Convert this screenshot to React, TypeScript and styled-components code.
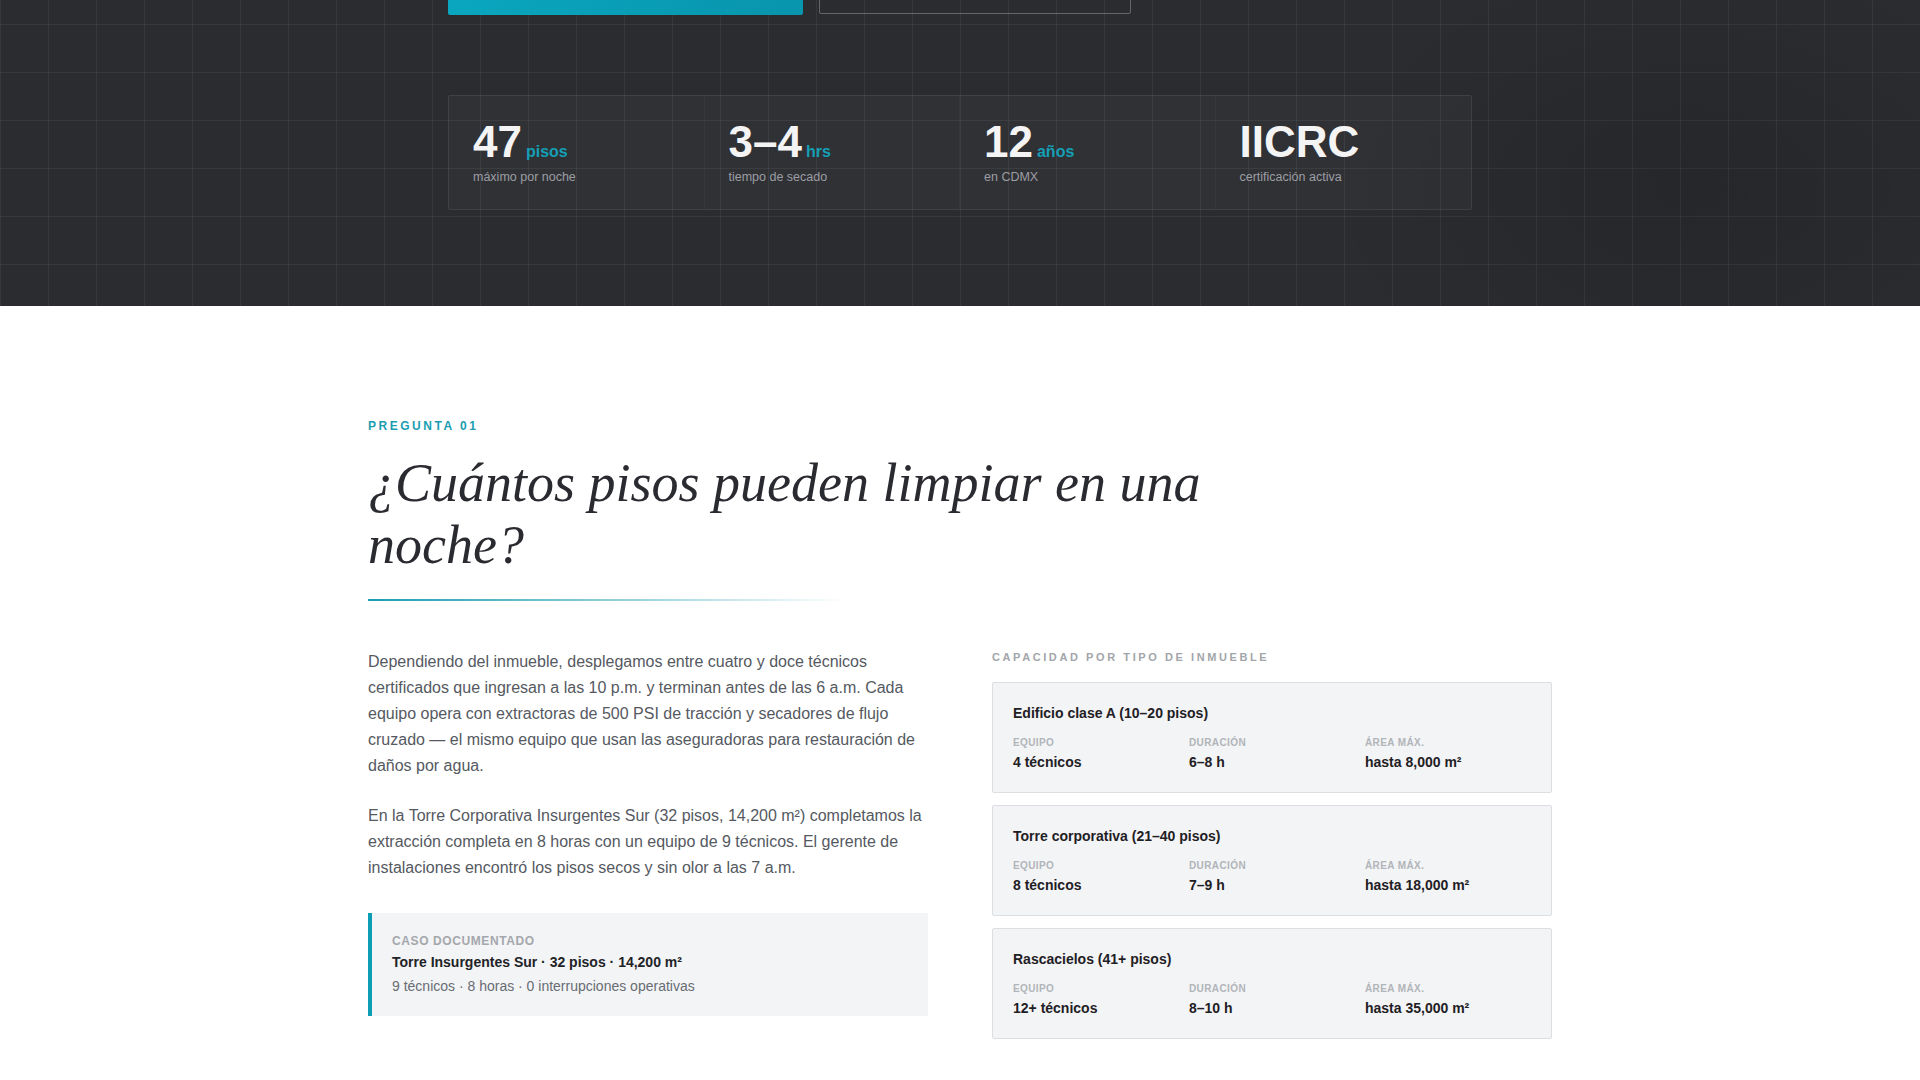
import styled, {createGlobalStyle} from "styled-components";

const GlobalStyle = createGlobalStyle`
    html, body {
        margin: 0;
        padding: 0;
        background: #ffffff;
        font-family: "Liberation Sans", Arial, sans-serif;
    }
    * {
        box-sizing: border-box;
    }
`

const Hero = styled.section`
    background-color: #2b2c30;
    background-image:
        radial-gradient(ellipse 380px 240px at 88% 62%, rgba(0, 0, 0, 0.12), rgba(0, 0, 0, 0)),
        linear-gradient(to right, rgba(255, 255, 255, 0.055) 1px, transparent 1px),
        linear-gradient(to bottom, rgba(255, 255, 255, 0.055) 1px, transparent 1px);
    background-size: 100% 100%, 48px 48px, 48px 48px;
    background-position: 0 0, 0 24px, 0 24px;
    height: 306px;
    overflow: hidden;
`

const HeroInner = styled.div`
    width: 1024px;
    margin: 0 auto;
`

const ButtonRow = styled.div`
    display: flex;
    gap: 16px;
    margin-top: -37px;
    height: 52px;
`

const PrimaryButton = styled.div`
    width: 355px;
    height: 52px;
    border-radius: 2px;
    background: linear-gradient(90deg, #0aa6bf, #0895ad);
`

const GhostButton = styled.div`
    width: 312px;
    height: 51px;
    border-radius: 2px;
    border: 1px solid rgba(255, 255, 255, 0.28);
`

const StatsBox = styled.div`
    margin-top: 80px;
    display: grid;
    grid-template-columns: repeat(4, 1fr);
    border: 1px solid rgba(255, 255, 255, 0.08);
    background: rgba(255, 255, 255, 0.028);
    border-radius: 2px;
`

const Stat = styled.div`
    padding: 24px;
    border-right: 1px solid rgba(255, 255, 255, 0.035);

    &:last-child {
        border-right: none;
    }
`

const StatValue = styled.div`
    display: flex;
    align-items: baseline;
    height: 44px;
    line-height: 1;
`

const StatNumber = styled.span`
    font-size: 44px;
    font-weight: 700;
    color: #f4f4f5;
`

const StatUnit = styled.span`
    font-size: 16px;
    font-weight: 700;
    color: #149fb5;
    margin-left: 4px;
`

const StatLabel = styled.div`
    margin-top: 5px;
    font-size: 12.5px;
    line-height: 16px;
    color: #9c9ea4;
`

const Section = styled.section`
    width: 1184px;
    margin: 0 auto;
    padding: 112px 0 40px;
`

const Eyebrow = styled.div`
    font-size: 12px;
    line-height: 16px;
    font-weight: 700;
    letter-spacing: 0.21em;
    color: #1a9db2;
`

const Heading = styled.h2`
    margin: 18px 0 0;
    max-width: 900px;
    font-family: "Liberation Serif", "Times New Roman", serif;
    font-style: italic;
    font-weight: 400;
    font-size: 54px;
    line-height: 62px;
    color: #2a2b30;
`

const Divider = styled.div`
    margin-top: 23px;
    width: 480px;
    height: 2px;
    background: linear-gradient(90deg, #1a9db2, rgba(26, 157, 178, 0));
`

const Columns = styled.div`
    margin-top: 48px;
    display: grid;
    grid-template-columns: 1fr 1fr;
    gap: 64px;
    align-items: start;
`

const Body = styled.p`
    margin: 0 0 24px;
    font-size: 16px;
    line-height: 26px;
    color: #555961;
`

const CaseBox = styled.div`
    margin-top: 32px;
    padding: 20px 20px;
    border-left: 4px solid #0c9eb4;
    background: #f3f4f6;
`

const CaseLabel = styled.div`
    font-size: 12px;
    line-height: 16px;
    font-weight: 700;
    letter-spacing: 0.05em;
    color: #a4a7ac;
`

const CaseTitle = styled.div`
    margin-top: 3px;
    font-size: 14px;
    line-height: 20px;
    font-weight: 700;
    color: #222327;
`

const CaseMeta = styled.div`
    margin-top: 4px;
    font-size: 14px;
    line-height: 20px;
    color: #686c73;
`

const CapacityLabel = styled.div`
    font-size: 11px;
    line-height: 16px;
    font-weight: 700;
    letter-spacing: 0.235em;
    color: #a2a5aa;
`

const CardList = styled.div`
    margin-top: 17px;
    display: flex;
    flex-direction: column;
    gap: 12px;
`

const Card = styled.div`
    padding: 20px;
    border: 1px solid #dcdee2;
    border-radius: 2px;
    background: #f3f4f6;
`

const CardTitle = styled.div`
    font-size: 14px;
    line-height: 21px;
    font-weight: 700;
    color: #1f2024;
`

const CardGrid = styled.div`
    margin-top: 12px;
    display: grid;
    grid-template-columns: repeat(3, 1fr);
    gap: 10px;
`

const FieldLabel = styled.div`
    font-size: 10px;
    line-height: 14px;
    font-weight: 700;
    letter-spacing: 0.04em;
    color: #b1b4b9;
`

const FieldValue = styled.div`
    margin-top: 2px;
    font-size: 14px;
    line-height: 20px;
    font-weight: 700;
    color: #1f2024;
`

const stats = [
    {number: "47", unit: "pisos", label: "máximo por noche"},
    {number: "3–4", unit: "hrs", label: "tiempo de secado"},
    {number: "12", unit: "años", label: "en CDMX"},
    {number: "IICRC", unit: "", label: "certificación activa"},
]

const capacities = [
    {title: "Edificio clase A (10–20 pisos)", team: "4 técnicos", time: "6–8 h", area: "hasta 8,000 m²"},
    {title: "Torre corporativa (21–40 pisos)", team: "8 técnicos", time: "7–9 h", area: "hasta 18,000 m²"},
    {title: "Rascacielos (41+ pisos)", team: "12+ técnicos", time: "8–10 h", area: "hasta 35,000 m²"},
]

const App = () => {
    return (
        <>
            <GlobalStyle/>
            <Hero>
                <HeroInner>
                    <ButtonRow>
                        <PrimaryButton/>
                        <GhostButton/>
                    </ButtonRow>
                    <StatsBox>
                        {stats.map((s) => (
                            <Stat key={s.label}>
                                <StatValue>
                                    <StatNumber>{s.number}</StatNumber>
                                    {s.unit && <StatUnit>{s.unit}</StatUnit>}
                                </StatValue>
                                <StatLabel>{s.label}</StatLabel>
                            </Stat>
                        ))}
                    </StatsBox>
                </HeroInner>
            </Hero>

            <Section>
                <Eyebrow>PREGUNTA 01</Eyebrow>
                <Heading>¿Cuántos pisos pueden limpiar en una noche?</Heading>
                <Divider/>
                <Columns>
                    <div>
                        <Body>
                            Dependiendo del inmueble, desplegamos entre cuatro y doce técnicos certificados que
                            ingresan a las 10 p.m. y terminan antes de las 6 a.m. Cada equipo opera con extractoras
                            de 500 PSI de tracción y secadores de flujo cruzado — el mismo equipo que usan las
                            aseguradoras para restauración de daños por agua.
                        </Body>
                        <Body>
                            En la Torre Corporativa Insurgentes Sur (32 pisos, 14,200 m²) completamos la extracción
                            completa en 8 horas con un equipo de 9 técnicos. El gerente de instalaciones encontró
                            los pisos secos y sin olor a las 7 a.m.
                        </Body>
                        <CaseBox>
                            <CaseLabel>CASO DOCUMENTADO</CaseLabel>
                            <CaseTitle>Torre Insurgentes Sur · 32 pisos · 14,200 m²</CaseTitle>
                            <CaseMeta>9 técnicos · 8 horas · 0 interrupciones operativas</CaseMeta>
                        </CaseBox>
                    </div>
                    <div>
                        <CapacityLabel>CAPACIDAD POR TIPO DE INMUEBLE</CapacityLabel>
                        <CardList>
                            {capacities.map((c) => (
                                <Card key={c.title}>
                                    <CardTitle>{c.title}</CardTitle>
                                    <CardGrid>
                                        <div>
                                            <FieldLabel>EQUIPO</FieldLabel>
                                            <FieldValue>{c.team}</FieldValue>
                                        </div>
                                        <div>
                                            <FieldLabel>DURACIÓN</FieldLabel>
                                            <FieldValue>{c.time}</FieldValue>
                                        </div>
                                        <div>
                                            <FieldLabel>ÁREA MÁX.</FieldLabel>
                                            <FieldValue>{c.area}</FieldValue>
                                        </div>
                                    </CardGrid>
                                </Card>
                            ))}
                        </CardList>
                    </div>
                </Columns>
            </Section>
        </>
    )
}

export default App;
